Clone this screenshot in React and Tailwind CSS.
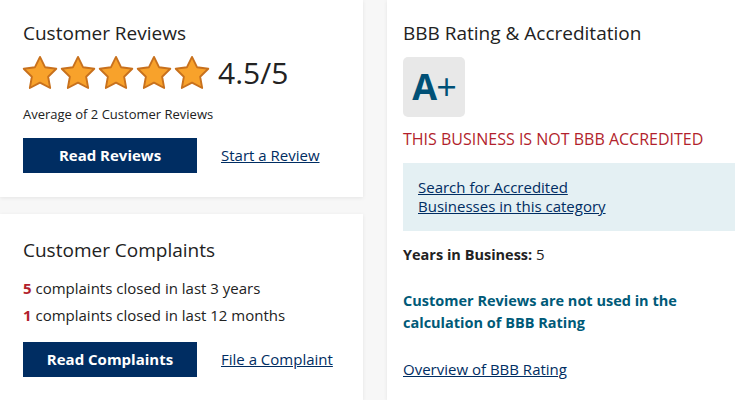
import React from "react";

const font = { fontFamily: "'Open Sans', Lato, sans-serif" };

function Star() {
  return (
    <svg width="38" height="36" viewBox="0 0 24 23" className="shrink-0">
      <path
        d="M12 1.2l3.2 6.6 7.2 1-5.2 5.1 1.3 7.2L12 17.7l-6.5 3.4 1.3-7.2L1.6 8.8l7.2-1z"
        fill="#f8a22b"
        stroke="#c8711d"
        strokeWidth="1.2"
        strokeLinejoin="round"
      />
    </svg>
  );
}

function Card({ children, className = "" }) {
  return (
    <div className={`bg-white shadow-[0_1px_4px_rgba(0,0,0,0.08)] px-[23px] ${className}`}>
      {children}
    </div>
  );
}

export default function App() {
  return (
    <div
      className="w-[749px] h-[400px] overflow-hidden bg-[#f7f7f7] flex text-[#222]"
      style={font}
    >
      {/* left column */}
      <div className="w-[363px] flex flex-col gap-[17px] shrink-0">
        <Card className="h-[197px] pt-[20px]">
          <h2 className="text-[19px] leading-[26px]">Customer Reviews</h2>
          <div className="flex items-center mt-[9px] -ml-[2px]">
            <Star />
            <Star />
            <Star />
            <Star />
            <Star />
            <span className="text-[30px] leading-none ml-[7px]">4.5/5</span>
          </div>
          <p className="text-[13px] mt-[14px] leading-[18px]">Average of 2 Customer Reviews</p>
          <div className="flex items-center gap-[24px] mt-[15px]">
            <button className="w-[174px] h-[35px] bg-[#002d62] text-white font-bold text-[15px]">
              Read Reviews
            </button>
            <a className="text-[15px] text-[#002d62] underline">Start a Review</a>
          </div>
        </Card>
        <Card className="flex-1 pt-[23px]">
          <h2 className="text-[19px] leading-[26px]">Customer Complaints</h2>
          <p className="text-[15px] mt-[14px] leading-[22px]">
            <span className="font-bold text-[#b21f2d]">5</span> complaints closed in last 3 years
          </p>
          <p className="text-[15px] mt-[5px] leading-[22px]">
            <span className="font-bold text-[#b21f2d]">1</span> complaints closed in last 12 months
          </p>
          <div className="flex items-center gap-[24px] mt-[16px]">
            <button className="w-[174px] h-[35px] bg-[#002d62] text-white font-bold text-[15px]">
              Read Complaints
            </button>
            <a className="text-[15px] text-[#002d62] underline">File a Complaint</a>
          </div>
        </Card>
      </div>

      {/* right column */}
      <div className="ml-[24px] flex-1 bg-white shadow-[0_1px_4px_rgba(0,0,0,0.08)] pl-[16px] pr-[14px] pt-[20px]">
        <h2 className="text-[19px] leading-[26px]">BBB Rating &amp; Accreditation</h2>
        <div className="mt-[11px] w-[62px] h-[60px] rounded-[5px] bg-[#e8e8e8] flex items-center justify-center">
          <span className="text-[#005076] font-bold text-[36px] leading-none tracking-tight">
            A<span className="font-normal">+</span>
          </span>
        </div>
        <p className="text-[16px] text-[#b21f2d] mt-[12px] leading-[20px]">
          THIS BUSINESS IS NOT BBB ACCREDITED
        </p>
        <div className="mt-[14px] bg-[#e4f0f3] h-[68px] pl-[15px] pt-[15px]">
          <a className="text-[15px] text-[#002d62] underline leading-[19px] block w-[200px]">
            Search for Accredited Businesses in this category
          </a>
        </div>
        <p className="text-[15px] mt-[13px] leading-[20px]">
          <span className="font-bold text-[14.5px]">Years in Business:</span> 5
        </p>
        <p className="text-[14.5px] font-bold text-[#005a78] mt-[25px] leading-[22px]">
          Customer Reviews are not used in the
          <br />
          calculation of BBB Rating
        </p>
        <a className="block text-[15px] text-[#002d62] underline mt-[25px] leading-[20px]">
          Overview of BBB Rating
        </a>
      </div>
    </div>
  );
}
